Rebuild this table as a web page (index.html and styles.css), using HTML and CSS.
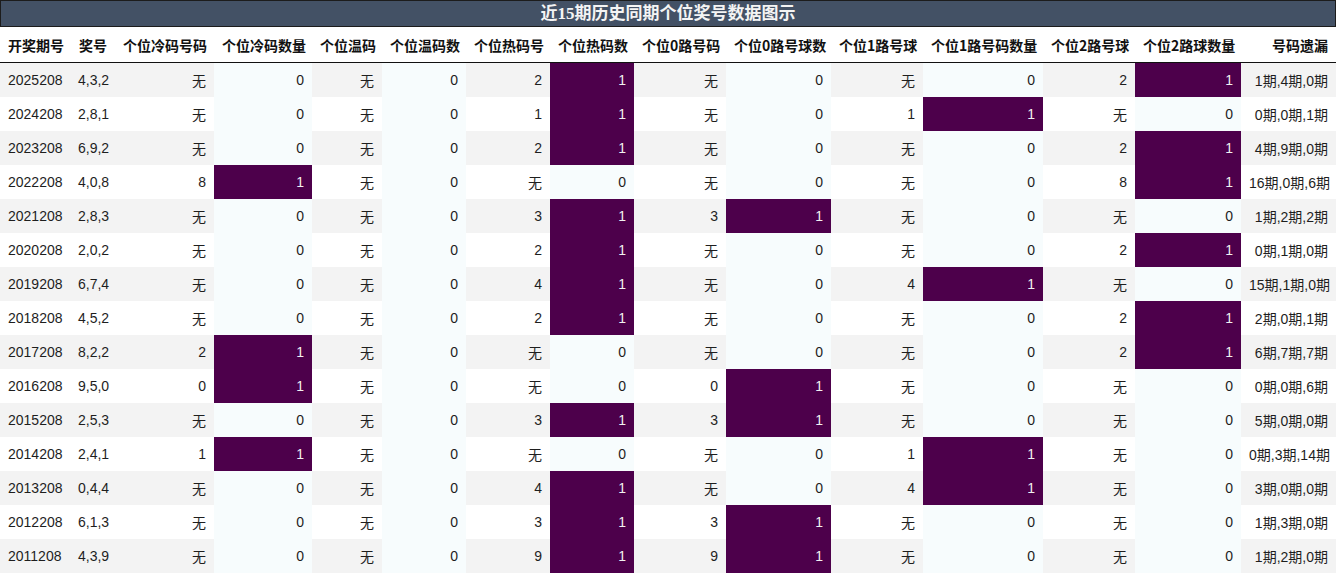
FILE: index.html
```html
<!DOCTYPE html>
<html lang="zh">
<head>
<meta charset="utf-8">
<title>近15期历史同期个位奖号数据图示</title>
<link rel="stylesheet" href="styles.css">
</head>
<body>
<div class="title">近15期历史同期个位奖号数据图示</div>
<table class="grid">
<colgroup>
<col class="w70"><col class="w45"><col class="w99"><col class="w98"><col class="w70"><col class="w84"><col class="w84"><col class="w84"><col class="w92"><col class="w105"><col class="w92"><col class="w120"><col class="w92"><col class="w106"><col class="w95">
</colgroup>
<thead>
<tr><th>开奖期号</th><th>奖号</th><th>个位冷码号码</th><th>个位冷码数量</th><th>个位温码</th><th>个位温码数</th><th>个位热码号</th><th>个位热码数</th><th>个位0路号码</th><th>个位0路号球数</th><th>个位1路号球</th><th>个位1路号码数量</th><th>个位2路号球</th><th>个位2路球数量</th><th>号码遗漏</th></tr>
</thead>
<tbody>
<tr><td class="l">2025208</td><td class="l">4,3,2</td><td>无</td><td class="c">0</td><td>无</td><td class="c">0</td><td>2</td><td class="c h">1</td><td>无</td><td class="c">0</td><td>无</td><td class="c">0</td><td>2</td><td class="c h">1</td><td>1期,4期,0期</td></tr>
<tr><td class="l">2024208</td><td class="l">2,8,1</td><td>无</td><td class="c">0</td><td>无</td><td class="c">0</td><td>1</td><td class="c h">1</td><td>无</td><td class="c">0</td><td>1</td><td class="c h">1</td><td>无</td><td class="c">0</td><td>0期,0期,1期</td></tr>
<tr><td class="l">2023208</td><td class="l">6,9,2</td><td>无</td><td class="c">0</td><td>无</td><td class="c">0</td><td>2</td><td class="c h">1</td><td>无</td><td class="c">0</td><td>无</td><td class="c">0</td><td>2</td><td class="c h">1</td><td>4期,9期,0期</td></tr>
<tr><td class="l">2022208</td><td class="l">4,0,8</td><td>8</td><td class="c h">1</td><td>无</td><td class="c">0</td><td>无</td><td class="c">0</td><td>无</td><td class="c">0</td><td>无</td><td class="c">0</td><td>8</td><td class="c h">1</td><td>16期,0期,6期</td></tr>
<tr><td class="l">2021208</td><td class="l">2,8,3</td><td>无</td><td class="c">0</td><td>无</td><td class="c">0</td><td>3</td><td class="c h">1</td><td>3</td><td class="c h">1</td><td>无</td><td class="c">0</td><td>无</td><td class="c">0</td><td>1期,2期,2期</td></tr>
<tr><td class="l">2020208</td><td class="l">2,0,2</td><td>无</td><td class="c">0</td><td>无</td><td class="c">0</td><td>2</td><td class="c h">1</td><td>无</td><td class="c">0</td><td>无</td><td class="c">0</td><td>2</td><td class="c h">1</td><td>0期,1期,0期</td></tr>
<tr><td class="l">2019208</td><td class="l">6,7,4</td><td>无</td><td class="c">0</td><td>无</td><td class="c">0</td><td>4</td><td class="c h">1</td><td>无</td><td class="c">0</td><td>4</td><td class="c h">1</td><td>无</td><td class="c">0</td><td>15期,1期,0期</td></tr>
<tr><td class="l">2018208</td><td class="l">4,5,2</td><td>无</td><td class="c">0</td><td>无</td><td class="c">0</td><td>2</td><td class="c h">1</td><td>无</td><td class="c">0</td><td>无</td><td class="c">0</td><td>2</td><td class="c h">1</td><td>2期,0期,1期</td></tr>
<tr><td class="l">2017208</td><td class="l">8,2,2</td><td>2</td><td class="c h">1</td><td>无</td><td class="c">0</td><td>无</td><td class="c">0</td><td>无</td><td class="c">0</td><td>无</td><td class="c">0</td><td>2</td><td class="c h">1</td><td>6期,7期,7期</td></tr>
<tr><td class="l">2016208</td><td class="l">9,5,0</td><td>0</td><td class="c h">1</td><td>无</td><td class="c">0</td><td>无</td><td class="c">0</td><td>0</td><td class="c h">1</td><td>无</td><td class="c">0</td><td>无</td><td class="c">0</td><td>0期,0期,6期</td></tr>
<tr><td class="l">2015208</td><td class="l">2,5,3</td><td>无</td><td class="c">0</td><td>无</td><td class="c">0</td><td>3</td><td class="c h">1</td><td>3</td><td class="c h">1</td><td>无</td><td class="c">0</td><td>无</td><td class="c">0</td><td>5期,0期,0期</td></tr>
<tr><td class="l">2014208</td><td class="l">2,4,1</td><td>1</td><td class="c h">1</td><td>无</td><td class="c">0</td><td>无</td><td class="c">0</td><td>无</td><td class="c">0</td><td>1</td><td class="c h">1</td><td>无</td><td class="c">0</td><td>0期,3期,14期</td></tr>
<tr><td class="l">2013208</td><td class="l">0,4,4</td><td>无</td><td class="c">0</td><td>无</td><td class="c">0</td><td>4</td><td class="c h">1</td><td>无</td><td class="c">0</td><td>4</td><td class="c h">1</td><td>无</td><td class="c">0</td><td>3期,0期,0期</td></tr>
<tr><td class="l">2012208</td><td class="l">6,1,3</td><td>无</td><td class="c">0</td><td>无</td><td class="c">0</td><td>3</td><td class="c h">1</td><td>3</td><td class="c h">1</td><td>无</td><td class="c">0</td><td>无</td><td class="c">0</td><td>1期,3期,0期</td></tr>
<tr><td class="l">2011208</td><td class="l">4,3,9</td><td>无</td><td class="c">0</td><td>无</td><td class="c">0</td><td>9</td><td class="c h">1</td><td>9</td><td class="c h">1</td><td>无</td><td class="c">0</td><td>无</td><td class="c">0</td><td>1期,2期,0期</td></tr>
</tbody>
</table>
</body>
</html>
```

FILE: styles.css
```css
html, body {
  margin: 0;
  padding: 0;
  background: #ffffff;
}
body {
  width: 1336px;
  font-family: "Liberation Sans", "Noto Sans CJK SC", sans-serif;
  color: #1e1e1e;
}
.title {
  box-sizing: border-box;
  height: 27px;
  border: 1px solid #1c1c1c;
  background: #435165;
  color: #f4f4f4;
  font-family: "Liberation Serif", "Noto Sans CJK SC", serif;
  font-weight: bold;
  font-size: 17px;
  line-height: 25px;
  text-align: center;
}
.grid {
  width: 1336px;
  table-layout: fixed;
  border-collapse: collapse;
  border-spacing: 0;
}
.w70 { width: 70px; }
.w45 { width: 45px; }
.w99 { width: 99px; }
.w98 { width: 98px; }
.w84 { width: 84px; }
.w92 { width: 92px; }
.w105 { width: 105px; }
.w120 { width: 120px; }
.w106 { width: 106px; }
.w95 { width: 95px; }
.grid th {
  height: 35px;
  padding: 0 8px;
  text-align: right;
  font-family: "Noto Sans CJK SC", sans-serif;
  font-weight: bold;
  font-size: 14px;
  color: #111;
  white-space: nowrap;
  border-bottom: 1px solid #111;
  background: #ffffff;
}
.grid td {
  height: 34px;
  padding: 0 8px;
  text-align: right;
  font-size: 14px;
  white-space: nowrap;
  vertical-align: middle;
}
.grid tbody tr:nth-child(odd) td { background: #f3f3f3; }
.grid tbody tr:nth-child(even) td { background: #ffffff; }
.grid td.l { text-align: left; }
.grid tbody tr td.c { background: #f7fcfd; }
.grid tbody tr td.h { background: #4d004b; color: #f1f1f1; }
```
